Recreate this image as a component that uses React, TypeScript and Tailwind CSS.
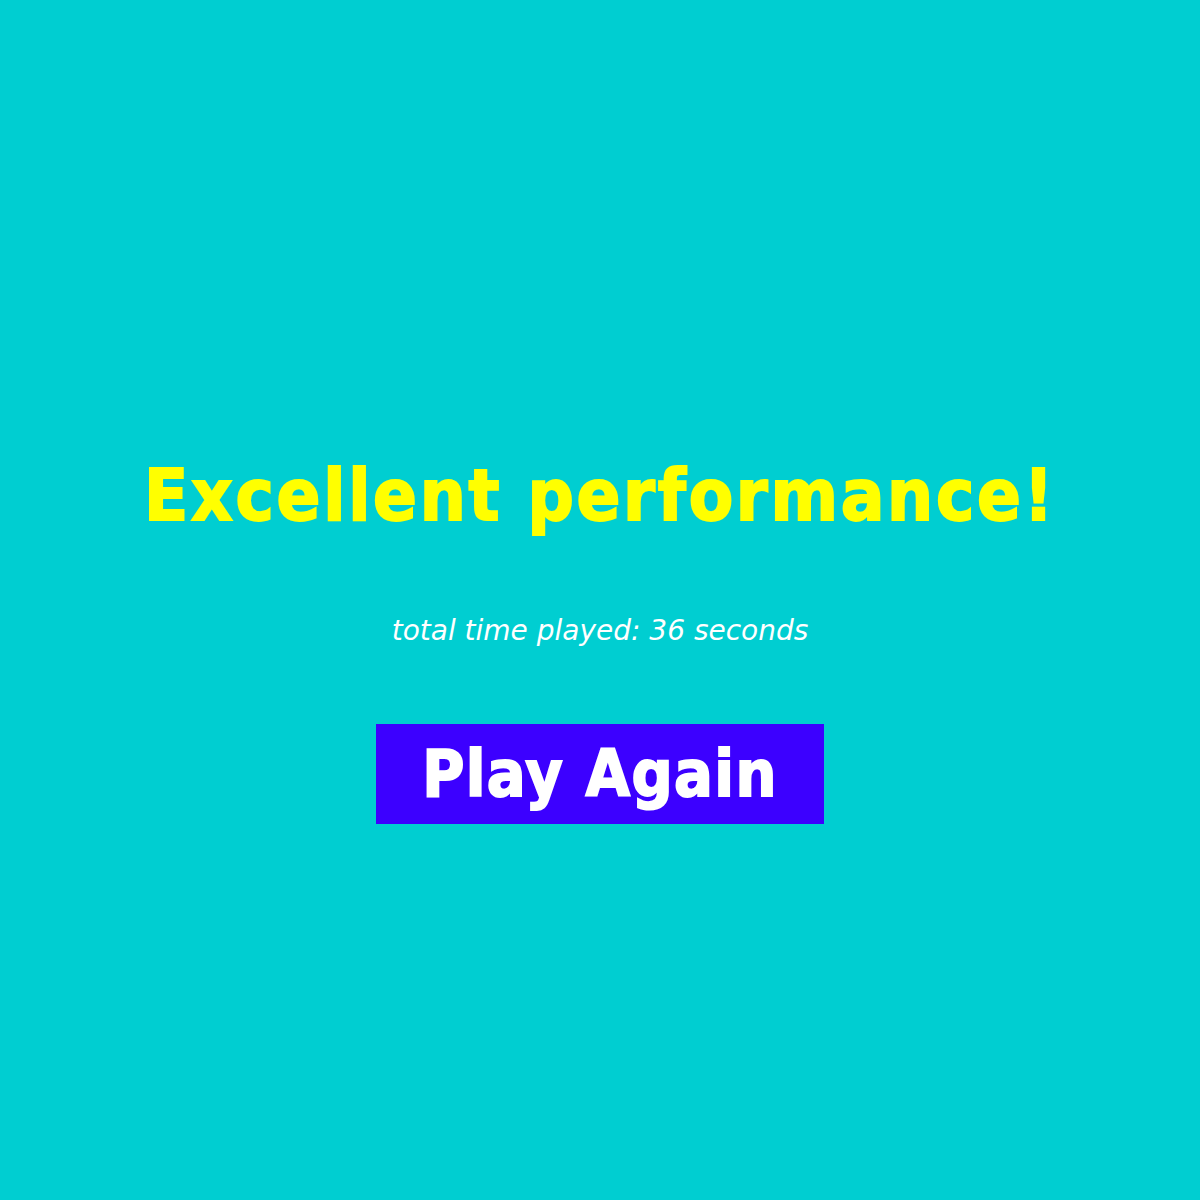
export default function App() {
  return (
    <div
      className="min-h-[1200px] w-full bg-[#00ced1] flex flex-col items-center pt-[453px]"
      style={{ fontFamily: '"DejaVu Sans", Verdana, sans-serif' }}
    >
      <h1 className="font-['DejaVu_Sans_Condensed','DejaVu_Sans',sans-serif] font-stretch-condensed text-[72px] leading-[84px] font-bold tracking-[2.7px] text-[#ffff00] [-webkit-text-stroke:1.8px_#ffff00]">
        Excellent performance!
      </h1>
      <p className="mt-[77px] text-[28px] leading-[33px] italic text-white">total time played: 36 seconds</p>
      <button className="mt-[77px] w-[448px] h-[100px] bg-[#3c00ff] text-white font-['DejaVu_Sans_Condensed','DejaVu_Sans',sans-serif] font-stretch-condensed text-[64px] font-bold tracking-[1.4px] leading-none flex items-center justify-center [-webkit-text-stroke:1.8px_#ffffff]">
        Play Again
      </button>
    </div>
  );
}
